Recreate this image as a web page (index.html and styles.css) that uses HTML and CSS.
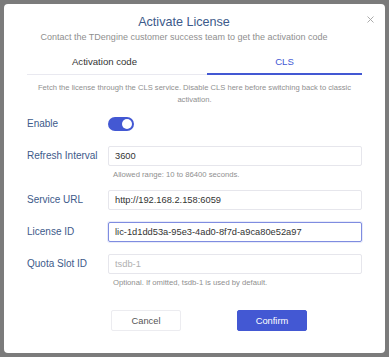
FILE: index.html
```html
<!DOCTYPE html>
<html lang="en">
<head>
    <meta charset="UTF-8">
    <meta name="viewport" content="width=device-width, initial-scale=1.0">
    <title>Activate License</title>
    <link rel="stylesheet" href="styles.css">
</head>
<body>
    <div class="modal">
        <button class="close" aria-label="Close">
            <svg width="7" height="7" viewBox="0 0 7 7"><path d="M0.5 0.5L6.5 6.5M6.5 0.5L0.5 6.5" stroke="#a3a3a3" stroke-width="0.9"/></svg>
        </button>
        <div class="modal-header">
            <h1 class="title">Activate License</h1>
            <p class="subtitle">Contact the TDengine customer success team to get the activation code</p>
        </div>

        <div class="tabs">
            <div class="tab tab-code">Activation code</div>
            <div class="tab active">CLS</div>
        </div>

        <p class="desc">Fetch the license through the CLS service. Disable CLS here before switching back to classic activation.</p>

        <form class="form">
            <div class="row row-enable">
                <label>Enable</label>
                <span class="switch"><span class="knob"></span></span>
            </div>

            <div class="row has-help">
                <label for="interval">Refresh Interval</label>
                <input type="text" id="interval" value="3600">
                <div class="help">Allowed range: 10 to 86400 seconds.</div>
            </div>

            <div class="row">
                <label for="url">Service URL</label>
                <input type="text" id="url" value="http://192.168.2.158:6059">
            </div>

            <div class="row">
                <label for="licenseId">License ID</label>
                <input type="text" id="licenseId" class="focused" value="lic-1d1dd53a-95e3-4ad0-8f7d-a9ca80e52a97">
            </div>

            <div class="row has-help">
                <label for="slot">Quota Slot ID</label>
                <input type="text" id="slot" placeholder="tsdb-1">
                <div class="help">Optional. If omitted, tsdb-1 is used by default.</div>
            </div>

            <div class="actions">
                <button type="button" class="btn">Cancel</button>
                <button type="button" class="btn btn-primary">Confirm</button>
            </div>
        </form>
    </div>
</body>
</html>
```

FILE: styles.css
```css
:root {
    --primary-color: #4358d3;
    --label-color: #3d5a8a;
    --muted-color: #8f8f8f;
    --border-color: #e6e6ec;
}

body {
    font-family: 'Liberation Sans', Arial, sans-serif;
    margin: 0;
    padding: 4px;
    background-color: #7b7b7b;
    box-sizing: border-box;
    height: 100vh;
}

.modal {
    position: relative;
    background-color: white;
    border-radius: 4px;
    height: 349px;
    padding: 10px 23px 0;
    box-sizing: border-box;
}

.close {
    position: absolute;
    top: 12px;
    right: 11px;
    background: none;
    border: none;
    padding: 0;
    line-height: 0;
}

.modal-header {
    padding-right: 21px;
    text-align: center;
}

.title {
    margin: 0;
    font-size: 12.6px;
    font-weight: normal;
    line-height: 16px;
    color: var(--label-color);
}

.subtitle {
    margin: 0;
    font-size: 9px;
    line-height: 14px;
    color: var(--muted-color);
}

.tabs {
    display: flex;
    margin-top: 4px;
    border-bottom: 1px solid #e9e9f0;
}

.tab {
    text-align: center;
    font-size: 9.6px;
    line-height: 14px;
    padding: 7px 0 4px;
    color: #333;
    border-bottom: 2px solid transparent;
    margin-bottom: -1px;
}

.tab-code {
    width: 180px;
    padding-right: 25px;
    box-sizing: border-box;
}

.tab.active {
    flex: 1;
    color: var(--primary-color);
    border-bottom-color: var(--primary-color);
}

.desc {
    margin: 7px 0 0;
    padding: 0 8px;
    font-size: 7.6px;
    line-height: 12px;
    text-align: center;
    color: var(--muted-color);
}

.form {
    margin-top: 11px;
}

.row {
    display: grid;
    grid-template-columns: 81px 1fr;
    align-items: center;
    margin-bottom: 12px;
}

.row label {
    font-size: 10px;
    line-height: 14px;
    color: var(--label-color);
}

.row-enable {
    margin-bottom: 15px;
}

.row.has-help {
    margin-bottom: 9px;
}

.row .help {
    grid-column: 2;
    margin-top: 3px;
    padding-left: 5px;
    font-size: 7.7px;
    line-height: 12px;
    color: var(--muted-color);
}

.switch {
    position: relative;
    display: inline-block;
    width: 26px;
    height: 14px;
    border-radius: 7px;
    background-color: var(--primary-color);
}

.knob {
    position: absolute;
    top: 2px;
    right: 2px;
    width: 10px;
    height: 10px;
    border-radius: 50%;
    background-color: white;
}

input {
    height: 20px;
    box-sizing: border-box;
    margin: 0;
    padding: 0 6px;
    border: 1px solid var(--border-color);
    border-radius: 2px;
    font-family: inherit;
    font-size: 9.3px;
    color: #333;
    outline: none;
}

input::placeholder {
    color: #b0b0b0;
}

input.focused {
    border-color: #7f8ce0;
    box-shadow: 0 0 0 1px rgba(67, 88, 211, 0.12);
}

.actions {
    display: flex;
    gap: 56px;
    margin-top: 21px;
    padding-left: 84px;
}

.btn {
    width: 70px;
    height: 21px;
    padding: 0;
    border: 1px solid #ececf0;
    border-radius: 2px;
    background-color: white;
    font-family: inherit;
    font-size: 9.3px;
    color: #555;
}

.btn-primary {
    background-color: var(--primary-color);
    border-color: var(--primary-color);
    color: white;
}
```
